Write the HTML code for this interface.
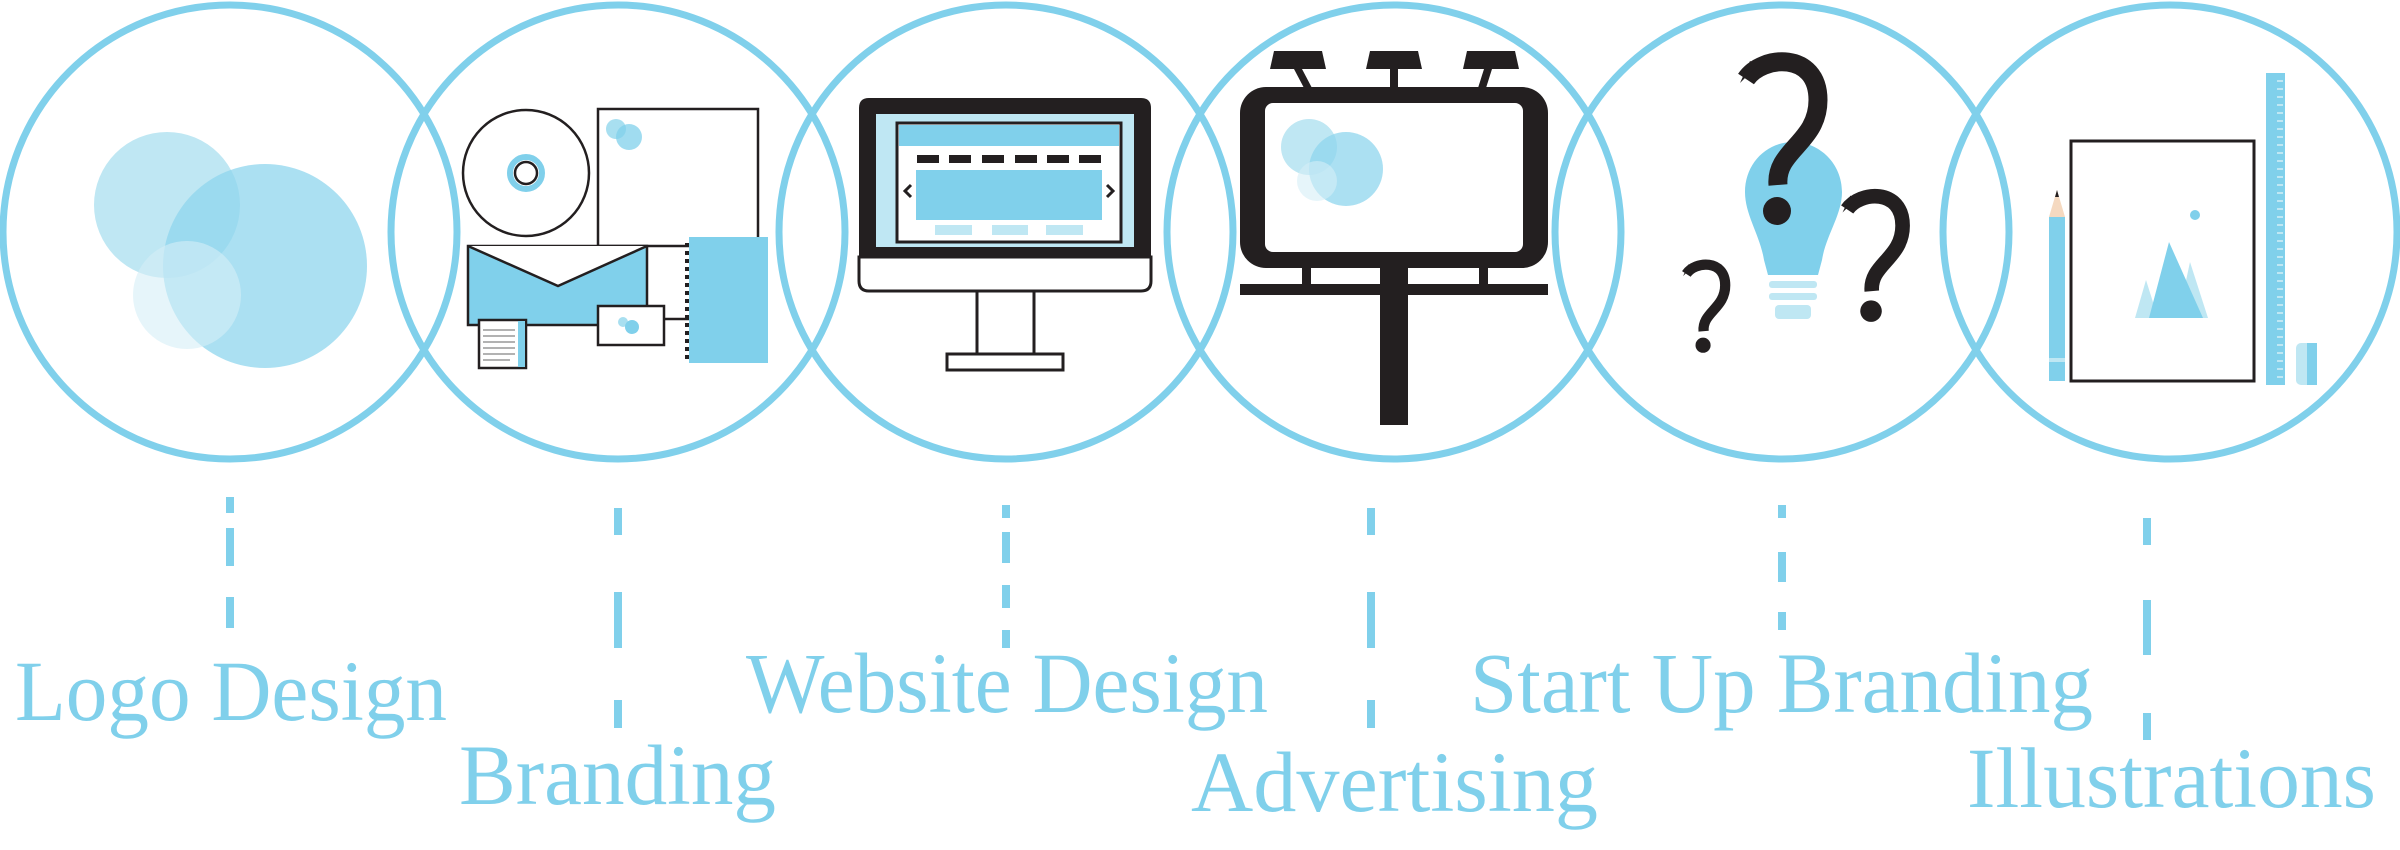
<!DOCTYPE html>
<html><head><meta charset="utf-8"><style>html,body{margin:0;padding:0;background:#fff}svg{display:block}</style></head>
<body>
<svg width="2400" height="850" viewBox="0 0 2400 850" xmlns="http://www.w3.org/2000/svg">
<defs>
<g id="q"><path d="M8,24 C24,0 80,-4 80,45 C80,88 37,95 40,130" fill="none" stroke="#231f20" stroke-width="19"/><path d="M2,28 L12,6 L20,10Z" fill="#231f20"/><circle cx="39" cy="156" r="14" fill="#231f20"/></g>
</defs>
<g fill="none" stroke="#80d0eb" stroke-width="7">
<circle cx="230" cy="232" r="227"/>
<circle cx="618" cy="232" r="227"/>
<circle cx="1006" cy="232" r="227"/>
<circle cx="1394" cy="232" r="227"/>
<circle cx="1782" cy="232" r="227"/>
<circle cx="2170" cy="232" r="227"/>
</g>
<!-- dashes -->
<g stroke="#80d0eb" stroke-width="8">
<line x1="230" y1="497" x2="230" y2="513"/><line x1="230" y1="528" x2="230" y2="566"/><line x1="230" y1="597" x2="230" y2="628"/>
<line x1="618" y1="508" x2="618" y2="535"/><line x1="618" y1="592" x2="618" y2="648"/><line x1="618" y1="700" x2="618" y2="728"/>
<line x1="1006" y1="505" x2="1006" y2="518"/><line x1="1006" y1="532" x2="1006" y2="563"/><line x1="1006" y1="585" x2="1006" y2="608"/><line x1="1006" y1="630" x2="1006" y2="648"/>
<line x1="1371" y1="508" x2="1371" y2="535"/><line x1="1371" y1="592" x2="1371" y2="648"/><line x1="1371" y1="700" x2="1371" y2="728"/>
<line x1="1782" y1="505" x2="1782" y2="518"/><line x1="1782" y1="552" x2="1782" y2="582"/><line x1="1782" y1="612" x2="1782" y2="630"/>
<line x1="2147" y1="518" x2="2147" y2="545"/><line x1="2147" y1="600" x2="2147" y2="655"/><line x1="2147" y1="713" x2="2147" y2="740"/>
</g>
<!-- texts -->
<g fill="#80d0eb" font-family="Liberation Serif, serif" font-size="86">
<text x="15" y="720" textLength="432" lengthAdjust="spacingAndGlyphs">Logo Design</text>
<text x="459" y="804" textLength="317" lengthAdjust="spacingAndGlyphs">Branding</text>
<text x="746" y="712" textLength="522" lengthAdjust="spacingAndGlyphs">Website Design</text>
<text x="1191" y="811" textLength="407" lengthAdjust="spacingAndGlyphs">Advertising</text>
<text x="1470" y="712" textLength="623" lengthAdjust="spacingAndGlyphs">Start Up Branding</text>
<text x="1967" y="807" textLength="409" lengthAdjust="spacingAndGlyphs">Illustrations</text>
</g>
<!-- logo icon -->
<circle cx="167" cy="205" r="73" fill="#bfe7f3"/>
<circle cx="265" cy="266" r="102" fill="#8fd6ee" opacity="0.75"/>
<circle cx="187" cy="295" r="54" fill="#d5eff7" opacity="0.6"/>
<!-- branding icon -->
<g stroke="#231f20" stroke-width="2.5">
<circle cx="526" cy="173" r="63" fill="#fff"/>
<circle cx="526" cy="173" r="16" fill="#fff" stroke="#80d0eb" stroke-width="6"/>
<circle cx="526" cy="173" r="11" fill="none"/>
<rect x="598" y="109" width="160" height="137" fill="#fff"/>
<rect x="468" y="246" width="179" height="79" fill="#80d0eb"/>
<polyline points="468,246 558,286 647,246" fill="#fff"/>
<rect x="598" y="306" width="66" height="39" fill="#fff"/>
<line x1="664" y1="319" x2="690" y2="319"/>
<rect x="479" y="320" width="47" height="48" fill="#fff"/>
</g>
<rect x="518" y="321" width="7" height="46" fill="#80d0eb"/>
<g stroke="#999" stroke-width="1.5"><line x1="483" y1="330" x2="515" y2="330"/><line x1="483" y1="336" x2="515" y2="336"/><line x1="483" y1="342" x2="515" y2="342"/><line x1="483" y1="348" x2="515" y2="348"/><line x1="483" y1="354" x2="515" y2="354"/><line x1="483" y1="360" x2="510" y2="360"/></g>
<circle cx="616" cy="129" r="10" fill="#a8dff0"/><circle cx="629" cy="137" r="13" fill="#80d0eb" opacity="0.75"/>
<circle cx="623" cy="322" r="5" fill="#a8dff0"/><circle cx="632" cy="327" r="7" fill="#80d0eb"/>
<rect x="689" y="237" width="79" height="126" fill="#80d0eb"/>
<line x1="687" y1="243" x2="687" y2="360" stroke="#231f20" stroke-width="4" stroke-dasharray="4,4"/>
<!-- monitor -->
<path d="M869,98 H1141 Q1151,98 1151,108 V257 H859 V108 Q859,98 869,98Z" fill="#231f20"/>
<path d="M859,257 H1151 V281 Q1151,291 1141,291 H869 Q859,291 859,281Z" fill="#fff" stroke="#231f20" stroke-width="3"/>
<rect x="876" y="114" width="258" height="133" fill="#bfe7f3"/>
<rect x="897" y="123" width="224" height="119" fill="#fff" stroke="#231f20" stroke-width="3"/>
<rect x="899" y="125" width="220" height="21" fill="#80d0eb"/>
<g fill="#231f20"><rect x="917" y="155" width="22" height="8"/><rect x="949" y="155" width="22" height="8"/><rect x="982" y="155" width="22" height="8"/><rect x="1015" y="155" width="22" height="8"/><rect x="1047" y="155" width="22" height="8"/><rect x="1079" y="155" width="22" height="8"/></g>
<rect x="916" y="170" width="186" height="50" fill="#80d0eb"/>
<g fill="none" stroke="#231f20" stroke-width="3"><polyline points="911,185 905,191 911,197"/><polyline points="1107,185 1113,191 1107,197"/></g>
<g fill="#bfe7f3"><rect x="935" y="225" width="37" height="10"/><rect x="992" y="225" width="36" height="10"/><rect x="1046" y="225" width="37" height="10"/></g>
<g fill="#fff" stroke="#231f20" stroke-width="3"><rect x="977" y="291" width="57" height="63"/><rect x="947" y="354" width="116" height="16"/></g>
<!-- billboard -->
<g fill="#231f20">
<rect x="1240" y="87" width="308" height="181" rx="26"/>
<path d="M1274,51 H1322 L1326,69 H1270Z"/><path d="M1370,51 H1418 L1422,69 H1366Z"/><path d="M1467,51 H1515 L1519,69 H1463Z"/>
<path d="M1294,69 L1302,69 L1312,88 L1304,88Z"/><rect x="1390" y="69" width="8" height="20"/><path d="M1484,69 L1492,69 L1486,88 L1478,88Z"/>
<rect x="1302" y="268" width="9" height="18"/><rect x="1479" y="268" width="9" height="18"/>
<rect x="1240" y="284" width="308" height="11"/>
<rect x="1380" y="268" width="28" height="157"/>
</g>
<rect x="1265" y="103" width="258" height="149" rx="8" fill="#fff"/>
<circle cx="1309" cy="147" r="28" fill="#bfe7f3"/>
<circle cx="1346" cy="169" r="37" fill="#8fd6ee" opacity="0.75"/>
<circle cx="1317" cy="181" r="20" fill="#d5eff7" opacity="0.6"/>
<!-- start up -->
<path d="M1793,142 C1820,142 1842,164 1842,192 C1842,215 1826,235 1822,260 L1818,275 H1768 L1764,260 C1760,235 1745,215 1745,192 C1745,164 1766,142 1793,142Z" fill="#80d0eb"/>
<g fill="#bfe7f3"><rect x="1769" y="281" width="48" height="7" rx="3"/><rect x="1769" y="293" width="48" height="7" rx="3"/><rect x="1775" y="305" width="36" height="14" rx="4"/></g>
<use href="#q" transform="translate(1738,55)"/>
<use href="#q" transform="translate(1682,261) scale(0.54)"/>
<use href="#q" transform="translate(1841,191) scale(0.77)"/>
<!-- illustrations -->
<rect x="2049" y="217" width="16" height="164" fill="#80d0eb"/>
<rect x="2049" y="358" width="16" height="4" fill="#bfe7f3"/>
<path d="M2049,217 L2057,190 L2065,217Z" fill="#f5d9c0"/>
<path d="M2055,197 L2057,190 L2059,197Z" fill="#231f20"/>
<rect x="2071" y="141" width="183" height="240" fill="#fff" stroke="#231f20" stroke-width="3"/>
<path d="M2135,318 L2146,280 L2158,318Z" fill="#bfe7f3"/>
<path d="M2178,318 L2190,262 L2208,318Z" fill="#bfe7f3"/>
<path d="M2149,318 L2169,242 L2203,318Z" fill="#80d0eb"/>
<circle cx="2195" cy="215" r="5" fill="#80d0eb"/>
<rect x="2266" y="73" width="19" height="312" fill="#80d0eb"/>
<line x1="2280" y1="80" x2="2280" y2="380" stroke="#bfe7f3" stroke-width="6" stroke-dasharray="2,6"/>
<rect x="2296" y="343" width="21" height="42" rx="5" fill="#bfe7f3"/>
<rect x="2307" y="343" width="10" height="42" fill="#80d0eb"/>
</svg>
</body></html>
